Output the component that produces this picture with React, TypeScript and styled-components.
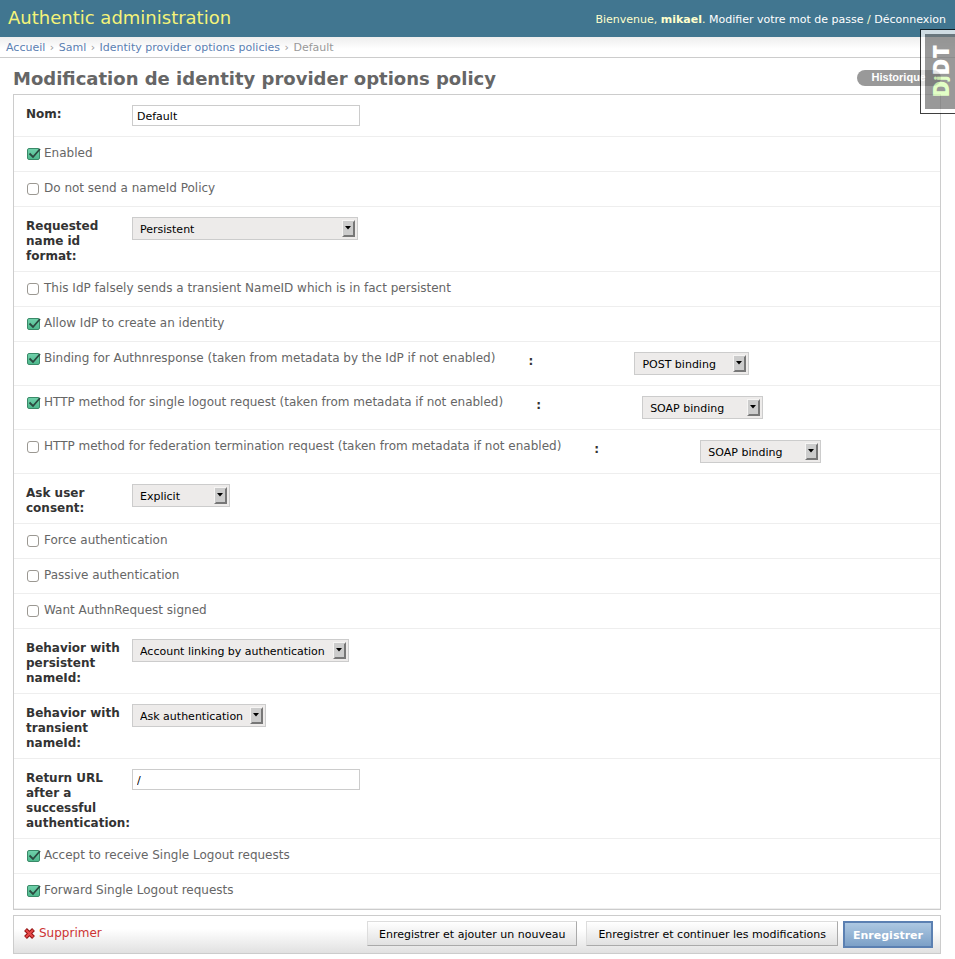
import React from "react";
import styled, { createGlobalStyle, css } from "styled-components";

const GlobalStyle = createGlobalStyle`
  * { box-sizing: border-box; }
  body {
    margin: 0;
    background: #fff;
    color: #333;
    font: 12px/15px "DejaVu Sans", sans-serif;
  }
  a { text-decoration: none; }
`;

const Header = styled.header`
  display: flex;
  justify-content: space-between;
  align-items: center;
  height: 37px;
  padding: 0 9px 0 8px;
  background: #417690;
  color: #ffc;
`;

const SiteName = styled.div`
  padding-bottom: 2px;
  color: #f4f379;
  font-size: 18px;
  line-height: 22px;
`;

const UserTools = styled.div`
  padding-top: 2px;
  font-size: 11px;
  a { color: #fff; }
`;

const Breadcrumbs = styled.nav`
  padding: 3px 6px 2px;
  border-bottom: 1px solid #ccc;
  background: linear-gradient(#eee, #fff 12px);
  color: #999;
  font-size: 11px;
  a { color: #5b80b2; }
`;

const Separator = styled.span`
  margin: 0 1px;
`;

const Content = styled.main`
  padding: 10px 14px 5px 13px;
`;

const TitleRow = styled.div`
  display: flex;
  justify-content: space-between;
  align-items: flex-start;
  height: 26px;
`;

const Title = styled.h1`
  margin: 0;
  color: #666;
  font-size: 18px;
  line-height: 22px;
`;

const HistoryLink = styled.a`
  margin-top: 2px;
  padding: 0 15px 1px;
  border-radius: 8px;
  background: #999;
  color: #fff;
  font: bold 11px/15px "Liberation Sans", sans-serif;
`;

const Module = styled.fieldset`
  min-width: 0;
  margin: 0 0 5px;
  padding: 0;
  border: 1px solid #ccc;
`;

const Row = styled.div`
  display: flex;
  align-items: flex-start;
  padding: 10px 12px 7px;
  border-bottom: 1px solid #eee;
`;

const FieldLabel = styled.label`
  flex: none;
  width: 106px;
  padding-top: 2px;
  font-weight: bold;
`;

const box = css`
  border: 1px solid #ccc;
  color: #000;
  font: 11px "DejaVu Sans", sans-serif;
`;

const TextInput = styled.input`
  ${box}
  width: 228px;
  height: 21px;
  margin: 0 0 3px;
  padding: 2px 4px 0;
  background: #fff;
`;

const SelectFrame = styled.span<{ $width: number }>`
  display: inline-grid;
  width: ${(p) => p.$width}px;
  height: 23px;
  margin-bottom: 3px;
  > * { grid-area: 1 / 1; }
  > svg { justify-self: end; align-self: center; margin-right: 3px; pointer-events: none; }
`;

const Select = styled.select`
  ${box}
  appearance: none;
  width: 100%;
  height: 23px;
  margin: 0;
  padding: 1px 18px 0 7px;
  border-radius: 0;
  background: #edebea;
`;

const CheckLabel = styled.label`
  color: #666;
`;

const CheckItem = styled.div<{ $paired?: boolean }>`
  display: flex;
  gap: 4px;
  height: 17px;
  margin-right: ${(p) => (p.$paired ? 33 : 0)}px;
  line-height: 12px;
`;

const CheckFrame = styled.span`
  display: inline-grid;
  width: 14px;
  height: 14px;
  > * { grid-area: 1 / 1; }
  > svg { pointer-events: none; visibility: hidden; }
  > input:checked + svg { visibility: visible; }
`;

const CheckInput = styled.input`
  appearance: none;
  width: 12px;
  height: 12px;
  margin: 1px;
  border: 1px solid #9b9892;
  border-radius: 3px;
  background: #fff;
  &:checked {
    width: 13px;
    border-color: #3a8a68;
    border-radius: 2px;
    background: linear-gradient(#6fd0aa, #4fb98e);
  }
`;

const SubmitRow = styled.div`
  display: flex;
  align-items: flex-start;
  gap: 9px;
  height: 39px;
  padding: 5px 7px 0 10px;
  border: 1px solid #ccc;
  background: linear-gradient(#fff 35%, #e1e1e1);
`;

const DeleteLink = styled.a`
  display: flex;
  align-items: center;
  gap: 4px;
  margin-right: auto;
  padding-top: 5px;
  color: #c33;
`;

const Button = styled.button`
  height: 25px;
  padding: 1px 11px 0;
  border: 1px solid;
  border-color: #ddd #aaa #aaa #ddd;
  background: linear-gradient(#fff, #e1e1e1);
  color: #000;
  font: 11px "DejaVu Sans", sans-serif;
`;

const PrimaryButton = styled(Button)`
  height: 27px;
  padding: 1px 8px 0;
  margin-left: -4px;
  border: 2px solid #5b80b2;
  background: linear-gradient(#adc8e2, #7ca0c7);
  color: #fff;
  font-weight: bold;
`;

const DebugHandle = styled.a`
  position: absolute;
  top: 29px;
  right: -1px;
  width: 36px;
  height: 85px;
  padding: 4px 0 4px 4px;
  border: 1px solid #000;
  background: #fff;
  opacity: 0.75;
`;

const DebugFace = styled.span`
  display: flex;
  align-items: center;
  justify-content: center;
  height: 75px;
  background: #777;
`;

const DebugText = styled.span`
  writing-mode: vertical-rl;
  rotate: 180deg;
  color: #fff;
  font: 800 23px/30px "Open Sans", sans-serif;
  b { color: #d9ffb3; font-weight: 800; }
  small { font-size: 16px; }
`;

const Check = ({ id, label, on, paired }: { id: string; label: string; on?: boolean; paired?: boolean }) => (
  <CheckItem $paired={paired}>
    <CheckFrame>
      <CheckInput type="checkbox" id={id} defaultChecked={on} />
      <svg width="15" height="14" viewBox="0 0 15 14" fill="none">
        <path d="M3.5 6.5 7 10 14 2" stroke="#2b4a40" strokeWidth="1.8" />
      </svg>
    </CheckFrame>
    <CheckLabel htmlFor={id}>{label}</CheckLabel>
  </CheckItem>
);

const Choice = ({ id, value, width }: { id: string; value: string; width: number }) => (
  <SelectFrame $width={width}>
    <Select id={id} defaultValue={value}>
      <option>{value}</option>
    </Select>
    <svg width="13" height="17" viewBox="0 0 13 17">
      <path d="M0 0H13V17H0Z" fill="#f6f5f4" />
      <path d="M13 0V17H0L2 15H11V2Z" fill="#777" />
      <path d="M1 1H11V15H1Z" fill="#ccc" />
      <path d="M3 6H9L6 9.5Z" fill="#000" />
    </svg>
  </SelectFrame>
);

type Field =
  | { kind: "text"; id: string; label: string; value: string }
  | { kind: "check"; id: string; label: string; on?: boolean }
  | { kind: "select"; id: string; label: string; value: string; width: number }
  | { kind: "binding"; id: string; label: string; on?: boolean; value: string; width: number };

const fields: Field[] = [
  { kind: "text", id: "name", label: "Nom:", value: "Default" },
  { kind: "check", id: "enabled", label: "Enabled", on: true },
  { kind: "check", id: "no-policy", label: "Do not send a nameId Policy" },
  { kind: "select", id: "format", label: "Requested name id format:", value: "Persistent", width: 226 },
  { kind: "check", id: "transient", label: "This IdP falsely sends a transient NameID which is in fact persistent" },
  { kind: "check", id: "create", label: "Allow IdP to create an identity", on: true },
  { kind: "binding", id: "authn", label: "Binding for Authnresponse (taken from metadata by the IdP if not enabled)", on: true, value: "POST binding", width: 115 },
  { kind: "binding", id: "logout", label: "HTTP method for single logout request (taken from metadata if not enabled)", on: true, value: "SOAP binding", width: 121 },
  { kind: "binding", id: "federation", label: "HTTP method for federation termination request (taken from metadata if not enabled)", value: "SOAP binding", width: 121 },
  { kind: "select", id: "consent", label: "Ask user consent:", value: "Explicit", width: 98 },
  { kind: "check", id: "force", label: "Force authentication" },
  { kind: "check", id: "passive", label: "Passive authentication" },
  { kind: "check", id: "signed", label: "Want AuthnRequest signed" },
  { kind: "select", id: "persistent", label: "Behavior with persistent nameId:", value: "Account linking by authentication", width: 217 },
  { kind: "select", id: "behavior-transient", label: "Behavior with transient nameId:", value: "Ask authentication", width: 134 },
  { kind: "text", id: "return-url", label: "Return URL after a successful authentication:", value: "/" },
  { kind: "check", id: "accept-slo", label: "Accept to receive Single Logout requests", on: true },
  { kind: "check", id: "forward-slo", label: "Forward Single Logout requests", on: true },
];

const FieldRow = ({ field: f }: { field: Field }) => {
  if (f.kind === "check") {
    return <Row><Check id={f.id} label={f.label} on={f.on} /></Row>;
  }
  if (f.kind === "binding") {
    return (
      <Row>
        <Check id={f.id} label={f.label} on={f.on} paired />
        <FieldLabel htmlFor={`${f.id}-value`}>:</FieldLabel>
        <Choice id={`${f.id}-value`} value={f.value} width={f.width} />
      </Row>
    );
  }
  return (
    <Row>
      <FieldLabel htmlFor={f.id}>{f.label}</FieldLabel>
      {f.kind === "text" ? (
        <TextInput id={f.id} type="text" defaultValue={f.value} />
      ) : (
        <Choice id={f.id} value={f.value} width={f.width} />
      )}
    </Row>
  );
};

export default function App() {
  return (
    <>
      <GlobalStyle />
      <Header>
        <SiteName>Authentic administration</SiteName>
        <UserTools>
          Bienvenue, <strong>mikael</strong>. <a href="#password">Modifier votre mot de passe</a> / <a href="#logout">Déconnexion</a>
        </UserTools>
      </Header>
      <Breadcrumbs>
        <a href="#home">Accueil</a> <Separator>›</Separator> <a href="#saml">Saml</a> <Separator>›</Separator>{" "}
        <a href="#policies">Identity provider options policies</a> <Separator>›</Separator> Default
      </Breadcrumbs>
      <Content>
        <TitleRow>
          <Title>Modification de identity provider options policy</Title>
          <HistoryLink href="#history">Historique</HistoryLink>
        </TitleRow>
        <form onSubmit={(e) => e.preventDefault()}>
          <Module>
            {fields.map((f) => <FieldRow key={f.id} field={f} />)}
          </Module>
          <SubmitRow>
            <DeleteLink href="#delete">
              <svg width="11" height="11" viewBox="0 0 11 11">
                <path d="M1.5 1.5 9.5 9.5M9.5 1.5 1.5 9.5" stroke="#901010" strokeWidth="4" />
                <path d="M2 2 9 9M9 2 2 9" stroke="#e54848" strokeWidth="2.2" />
              </svg>
              Supprimer
            </DeleteLink>
            <Button type="submit">Enregistrer et ajouter un nouveau</Button>
            <Button type="submit">Enregistrer et continuer les modifications</Button>
            <PrimaryButton type="submit">Enregistrer</PrimaryButton>
          </SubmitRow>
        </form>
      </Content>
      <DebugHandle href="#debug">
        <DebugFace><DebugText><b>D<small>j</small></b>DT</DebugText></DebugFace>
      </DebugHandle>
    </>
  );
}
